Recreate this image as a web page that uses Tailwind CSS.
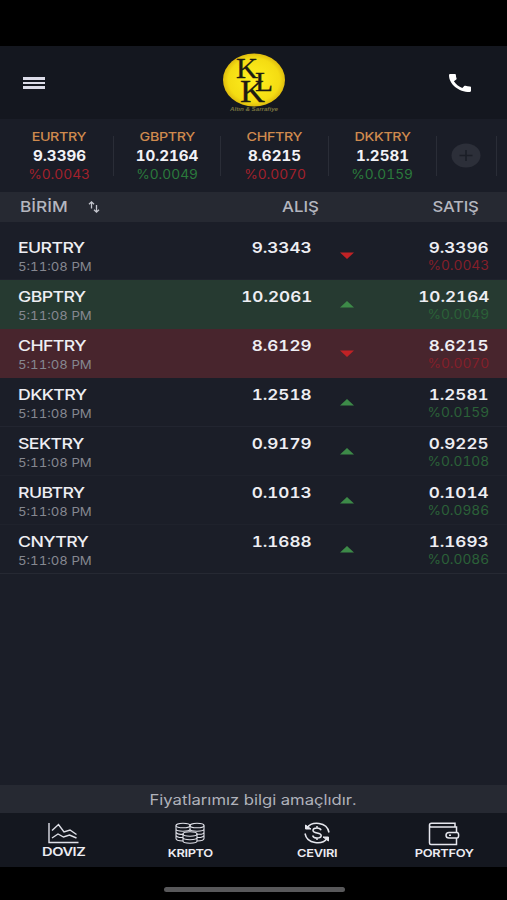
<!DOCTYPE html>
<html lang="tr">

<head>
    <meta charset="UTF-8">
    <meta name="viewport" content="width=device-width, initial-scale=1.0">
    <title>Döviz</title>
    <script src="https://cdn.jsdelivr.net/npm/@tailwindcss/browser@4"></script>
</head>

<body class="bg-black font-['Inter',sans-serif] tabular-nums">
    <div class="flex flex-col w-[507px] h-[900px] pt-[46px] overflow-hidden">

        <!-- Top bar -->
        <header class="h-[73px] shrink-0 bg-[#14171f] flex items-start justify-between pl-[23px] pr-[36px]">
            <button class="mt-[31px] flex flex-col gap-[2px]">
                <span class="block w-[22px] h-[2.7px] bg-[#dcdce8]"></span>
                <span class="block w-[22px] h-[2.7px] bg-[#dcdce8]"></span>
                <span class="block w-[22px] h-[2.7px] bg-[#dcdce8]"></span>
            </button>
            <svg class="mt-[6px] ml-[14px]" width="66" height="62" viewBox="0 0 66 62">
                <defs>
                    <radialGradient id="gold" cx="50%" cy="50%" r="55%">
                        <stop offset="0" stop-color="#fff01f" />
                        <stop offset="0.75" stop-color="#f4dc12" />
                        <stop offset="1" stop-color="#d3aa0c" />
                    </radialGradient>
                </defs>
                <ellipse cx="33" cy="28" rx="31" ry="26.5" fill="url(#gold)" />
                <g font-family="Liberation Serif, serif" fill="#1d1c12" stroke="#1d1c12" stroke-width="0.3">
                    <text x="15" y="26" font-size="29" textLength="22" lengthAdjust="spacingAndGlyphs">K</text>
                    <text x="34" y="39" font-size="28" textLength="18" lengthAdjust="spacingAndGlyphs">L</text>
                    <text x="19" y="49.500" font-size="31" textLength="25" lengthAdjust="spacingAndGlyphs">K</text>
                </g>
                <text x="9" y="59" font-family="Liberation Sans, sans-serif" font-weight="bold" font-style="italic" font-size="5" fill="#77733f" textLength="48" lengthAdjust="spacingAndGlyphs">Altın &amp; Sarrafiye</text>
            </svg>
            <svg class="mt-[28px]" width="22" height="18" viewBox="3 3 18 18" preserveAspectRatio="none" fill="#fff">
                <path d="M20.01 15.38c-1.23 0-2.42-.2-3.53-.56-.35-.12-.74-.03-1.01.24l-1.57 1.97c-2.83-1.35-5.48-3.9-6.89-6.83l1.95-1.66c.27-.28.35-.67.24-1.02-.37-1.11-.56-2.3-.56-3.53 0-.54-.45-.99-.99-.99H4.19C3.65 3 3 3.24 3 3.99 3 13.28 10.73 21 20.01 21c.71 0 .99-.63.99-1.18v-3.45c0-.54-.45-.99-.99-.99z" />
            </svg>
        </header>

        <!-- Ticker -->
        <div id="ticker" class="h-[73px] shrink-0 bg-[#1a1d27] flex items-start pl-[6px]"></div>

        <!-- Column titles -->
        <div class="h-[30px] shrink-0 bg-[#262932] flex items-center text-[15px] font-medium text-[#b4b6bf]">
            <div class="w-[203px] pl-[20px] flex items-center">
                <span class="w-[68px]"><span class="inline-block origin-left scale-x-[1.15]">BİRİM</span></span>
                <svg width="12" height="14" viewBox="0 0 12 14" fill="none" stroke="#c4c6ce" stroke-width="1.3">
                    <path d="M3.5 8.5V2M1 4.3L3.5 1.8L6 4.3M8.5 5v7M6 9.7l2.5 2.5L11 9.7" />
                </svg>
            </div>
            <div class="w-[116px] text-right"><span class="inline-block origin-right scale-x-[1.12]">ALIŞ</span></div>
            <div class="grow pr-[28px] text-right"><span class="inline-block tracking-[-0.2px] origin-right scale-x-[1.11]">SATIŞ</span></div>
        </div>

        <!-- Rates -->
        <main id="rates" class="grow bg-[#1b1e28] pt-[9px]"></main>

        <div class="h-[28px] shrink-0 bg-[#262932] text-center text-[14px] leading-[29px] text-[#b0b2bb]">
            <span class="inline-block scale-x-[1.19]">Fiyatlarımız bilgi amaçlıdır.</span>
        </div>

        <!-- Bottom navigation -->
        <nav class="h-[54px] shrink-0 bg-[#14171f] grid grid-cols-4 text-[11px] leading-[14px] font-semibold text-[#ececf2]">
            <a class="flex flex-col items-center pt-[9px]">
                <svg width="32" height="22" viewBox="0 0 32 22" fill="none" stroke="#dfe0e8" stroke-width="1.4">
                    <path d="M2 1v19.500h29.500M5 8.500L11.500 2.500l5.500 7.500 6-2L29.500 12.500M5 16l6-4 5.500 3 6-2L29.500 16" />
                </svg>
                <span class="mt-[1px] inline-block text-[12px] tracking-[-0.4px] scale-x-[1.22]">DOVIZ</span>
            </a>
            <a class="flex flex-col items-center pt-[9px]">
                <svg width="32" height="22" viewBox="0 0 32 22" fill="none" stroke="#dfe0e8" stroke-width="1.1">
                    <ellipse cx="9" cy="3.500" rx="7" ry="2.3" />
                    <ellipse cx="23" cy="3.500" rx="7" ry="2.3" />
                    <path d="M2 3.500v13c0 1.500 3 2.500 7 2.500M30 3.500v13c0 1.500-3 2.500-7 2.500M16 3.500v6M2 7c0 3 14 3 14 0c0 3 14 3 14 0M2 10.300c1 2 5 2.200 7.500 1.800M22.500 12.100c3 .4 7 .2 7.500-1.800M2 13.500c1 1.800 4 2.200 7 2M23 15.500c3 .2 6-.2 7-2" />
                    <ellipse cx="16" cy="12" rx="7" ry="2.200" />
                    <path d="M9 12v7c0 3 14 3 14 0v-7M9 15.500c0 3 14 3 14 0" />
                </svg>
                <span class="mt-[2px] inline-block tracking-[-0.3px] scale-x-[1.17]">KRIPTO</span>
            </a>
            <a class="flex flex-col items-center pt-[9px]">
                <svg width="28" height="22" viewBox="0 0 28 22" fill="none" stroke="#e6e7ee" stroke-width="1.5">
                    <path d="M4 6C8.500-.8 24-.8 26 10.500M24 16.500C19.500 23 4 22.500 2 11.500" />
                    <path d="M2.500 3v4h5.500zM25.500 19v-4H20z" fill="#e6e7ee" stroke-width="1" />
                    <path d="M18 8.200c-.4-1.500-2-2.200-4-2.200-2.400 0-4 .9-4 2.500 0 3.400 8.200 1.600 8.200 5 0 1.600-1.700 2.500-4.200 2.500-2.400 0-4-.9-4.300-2.500M14 4v2M14 16v2" />
                </svg>
                <span class="mt-[2px] inline-block tracking-[-0.3px] scale-x-[1.17]">CEVIRI</span>
            </a>
            <a class="flex flex-col items-center pt-[9px]">
                <svg width="32" height="24" viewBox="0 0 32 24" fill="none" stroke="#e6e7ee" stroke-width="1.500">
                    <path d="M27 5V1.200H3.500C2 1.200 1.500 2 1.500 3v18c0 1 .5 1.500 1.500 1.500h25.500V16M28.500 10.500V5H3C2 5 1.500 4.500 1.500 3" />
                    <path d="M29 10.500h-8c-4 0-4 5.500 0 5.500h8c2.200 0 2.200-5.500 0-5.500z" />
                    <path d="M21 13.200h2" />
                </svg>
                <span class="inline-block tracking-[-0.3px] scale-x-[1.17]">PORTFOY</span>
            </a>
        </nav>

        <div class="h-[33px] shrink-0 pt-[20px]">
            <div class="w-[181px] h-[5px] ml-[164px] rounded-full bg-[#58585a]"></div>
        </div>
    </div>
</body>
<script>
    const rates = [
        { name: "EURTRY", buy: "9.3343", sell: "9.3396", change: "%0.0043", up: false, row: "border-[#1f222c]" },
        { name: "GBPTRY", buy: "10.2061", sell: "10.2164", change: "%0.0049", up: true, row: "bg-[#263a31] border-[#263a31]" },
        { name: "CHFTRY", buy: "8.6129", sell: "8.6215", change: "%0.0070", up: false, row: "bg-[#48252d] border-[#48252d]" },
        { name: "DKKTRY", buy: "1.2518", sell: "1.2581", change: "%0.0159", up: true, row: "border-[#222530]" },
        { name: "SEKTRY", buy: "0.9179", sell: "0.9225", change: "%0.0108", up: true, row: "border-[#1f222c]" },
        { name: "RUBTRY", buy: "0.1013", sell: "0.1014", change: "%0.0986", up: true, row: "border-[#1f222c]" },
        { name: "CNYTRY", buy: "1.1688", sell: "1.1693", change: "%0.0086", up: true, row: "border-[#262933]" },
    ]

    const ticker = document.getElementById("ticker")
    rates.slice(0, 4).forEach((rate) => {
        ticker.innerHTML += `
        <div class="w-[107.7px] shrink-0 h-[73px] flex items-center">
            <div class="grow h-[73px] pt-[8px] flex flex-col items-center">
                <span class="text-[12px] leading-[19px] font-medium tracking-[-0.3px] text-[#cf8a4e] scale-x-[1.19]">${rate.name}</span>
                <span class="text-[14px] leading-[19px] font-bold text-[#f2f2f6] scale-x-[1.08]">${rate.sell}</span>
                <span class="text-[12.5px] leading-[20px] ${rate.up ? "text-[#2b7a3c]" : "text-[#a3212c]"} scale-x-[1.1]">${rate.change}</span>
            </div>
            <div class="w-px h-[40px] bg-[#2a2d37]"></div>
        </div>`
    })
    ticker.innerHTML += `
        <div class="w-[60px] h-[73px] flex items-center">
            <div class="grow flex justify-center">
                <svg width="30" height="25" viewBox="0 0 30 25"><ellipse cx="15" cy="12.500" rx="14.500" ry="12" fill="#2c2f39" /><path d="M8.500 12.500h13M15 7v11" stroke="#1b1e27" stroke-width="1.600" /></svg>
            </div>
            <div class="w-px h-[40px] bg-[#2a2d37]"></div>
        </div>`

    const list = document.getElementById("rates")
    rates.forEach((rate) => {
        list.innerHTML += `
        <div class="h-[49px] flex items-start border-b ${rate.row}">
            <div class="w-[203px] pl-[18px] pt-[6px] flex flex-col items-start">
                <span class="text-[15px] leading-[21px] font-medium tracking-[-0.5px] text-[#eeeef3] origin-left scale-x-[1.18]">${rate.name}</span>
                <span class="text-[12px] leading-[18px] text-[#858790] origin-left scale-x-[1.1]">5:11:08 PM</span>
            </div>
            <div class="w-[109px] pt-[6px] flex flex-col items-end">
                <span class="text-[15px] leading-[21px] font-semibold text-[#eeeef3] origin-right scale-x-[1.14]">${rate.buy}</span>
            </div>
            <svg class="ml-[28px] mt-[21px]" width="14" height="7" viewBox="0 0 14 7">
                ${rate.up ? `<path d="M0 6.500L7 0l7 6.500z" fill="#3d8a48" />` : `<path d="M0 .5h14L7 7z" fill="#c02225" />`}
            </svg>
            <div class="grow pr-[18px] pt-[7px] flex flex-col items-end">
                <span class="text-[15px] leading-[20px] font-semibold text-[#eeeef3] origin-right scale-x-[1.14]">${rate.sell}</span>
                <span class="text-[12.5px] leading-[16px] ${rate.up ? "text-[#2b6138]" : "text-[#841f2a]"} origin-right scale-x-[1.1]">${rate.change}</span>
            </div>
        </div>`
    })
</script>

</html>
